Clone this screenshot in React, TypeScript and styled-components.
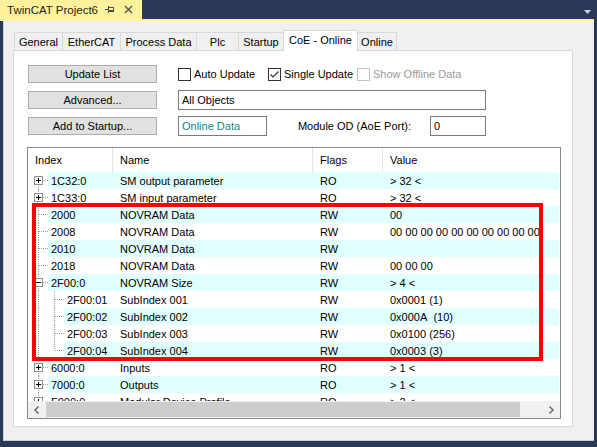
import React from "react";
import styled, { createGlobalStyle } from "styled-components";

const GlobalStyle = createGlobalStyle`
  html, body {
    margin: 0;
    padding: 0;
    background: #293955;
  }
  body {
    font-family: "Liberation Sans", Arial, sans-serif;
    font-size: 11px;
    color: #000;
  }
  * {
    box-sizing: border-box;
  }
`;

const Window = styled.div`
  width: 597px;
  height: 447px;
  background: #293955;
  display: flex;
  flex-direction: column;
  overflow: hidden;
`;

const TitleBar = styled.div`
  height: 19px;
  display: flex;
  align-items: stretch;
  flex-shrink: 0;
`;

const DocTab = styled.div`
  width: 142px;
  background: #fff29d;
  display: flex;
  align-items: center;
  padding-left: 7px;
  font-size: 11.5px;
  color: #1e1e1e;
`;

const DocTitle = styled.span`
  width: 105px;
  white-space: nowrap;
`;

const TabIcon = styled.span`
  display: flex;
  align-items: center;
  margin-right: 9px;
`;

const DropArrow = styled.span`
  margin-left: auto;
  margin-right: 6px;
  align-self: flex-end;
  margin-bottom: 5px;
  display: flex;
`;

const YellowRule = styled.div`
  height: 2px;
  margin-right: 3px;
  background: #fff29d;
  flex-shrink: 0;
`;

const Panel = styled.div`
  flex: 1;
  margin: 0 3px 6px 3px;
  background: #f0f0f0;
  border-left: 1px solid #cccedb;
  border-bottom: 1px solid #cccedb;
  padding-top: 9px;
  display: flex;
  flex-direction: column;
`;

const TabStrip = styled.div`
  display: flex;
  align-items: flex-end;
  height: 21px;
  margin-left: 10px;
  margin-bottom: -1px;
  position: relative;
  z-index: 1;
`;

const Tab = styled.div<{ $w: number; $active?: boolean }>`
  width: ${(p) => p.$w}px;
  height: ${(p) => (p.$active ? 21 : 18)}px;
  margin-bottom: ${(p) => (p.$active ? 0 : 1)}px;
  margin-right: -1px;
  border: 1px solid #d9d9d9;
  border-bottom: none;
  background: ${(p) => (p.$active ? "#ffffff" : "#f0f0f0")};
  display: flex;
  align-items: center;
  justify-content: center;
  padding-top: ${(p) => (p.$active ? 0 : 1)}px;
  padding-bottom: ${(p) => (p.$active ? 2 : 0)}px;
  white-space: nowrap;
  position: relative;
  z-index: ${(p) => (p.$active ? 2 : 1)};
`;

const Page = styled.div`
  margin-left: 9px;
  width: 560px;
  height: 377px;
  background: #ffffff;
  border: 1px solid #d9d9d9;
  padding: 13px 0 0 13px;
`;

const Controls = styled.div`
  display: grid;
  grid-template-columns: 129px 308px;
  column-gap: 21px;
  grid-auto-rows: 20px;
  row-gap: 6px;
  align-items: center;
  margin-left: 1px;
`;

const Button = styled.button`
  height: 18px;
  padding: 0;
  background: #e1e1e1;
  border: 1px solid #adadad;
  font-family: inherit;
  font-size: 11px;
  color: #000;
`;

const CheckRow = styled.div`
  display: flex;
  align-items: center;
`;

const CheckItem = styled.label<{ $w?: number; $disabled?: boolean }>`
  display: flex;
  align-items: center;
  gap: 3px;
  width: ${(p) => (p.$w ? `${p.$w}px` : "auto")};
  color: ${(p) => (p.$disabled ? "#9a9a9a" : "#000")};
  white-space: nowrap;
`;

const Box = styled.span<{ $disabled?: boolean }>`
  width: 13px;
  height: 13px;
  border: 1px solid ${(p) => (p.$disabled ? "#c4c4c4" : "#333333")};
  background: #fff;
  display: flex;
  align-items: center;
  justify-content: center;
  flex-shrink: 0;
`;

const TextField = styled.div<{ $w?: number; $teal?: boolean }>`
  height: 20px;
  width: ${(p) => (p.$w ? `${p.$w}px` : "100%")};
  border: 1px solid #7a7a7a;
  background: #fff;
  padding-left: 3px;
  display: flex;
  align-items: center;
  color: ${(p) => (p.$teal ? "#138585" : "#000")};
  flex-shrink: 0;
`;

const FieldRow = styled.div`
  display: flex;
  align-items: center;
`;

const PortLabel = styled.span`
  margin-left: auto;
  margin-right: 19px;
  white-space: nowrap;
`;

const ListBox = styled.div`
  margin-top: 11px;
  width: 534px;
  height: 272px;
  border: 1px solid #828790;
  background: #fff;
  position: relative;
  display: flex;
  flex-direction: column;
  overflow: hidden;
`;

const Header = styled.div`
  height: 24px;
  display: flex;
  flex-shrink: 0;
`;

const HeadCell = styled.div<{ $w?: number }>`
  width: ${(p) => (p.$w ? `${p.$w}px` : "auto")};
  flex: ${(p) => (p.$w ? "none" : 1)};
  padding-left: 7px;
  border-right: ${(p) => (p.$w ? "1px solid #e5e5e5" : "none")};
  display: flex;
  align-items: center;
`;

const Body = styled.div`
  flex: 1;
  overflow: hidden;
`;

const Row = styled.div`
  height: 17px;
  display: flex;
`;

const Band = styled.div<{ $alt: boolean }>`
  flex: 1;
  display: flex;
  align-items: center;
  margin-right: 1px;
  background: ${(p) => (p.$alt ? "#e0ffff" : "transparent")};
  white-space: nowrap;
  overflow: hidden;
`;

const Cell = styled.div<{ $w?: number; $pad?: number }>`
  width: ${(p) => (p.$w ? `${p.$w}px` : "auto")};
  flex: ${(p) => (p.$w ? "none" : 1)};
  padding-left: ${(p) => p.$pad ?? 7}px;
  overflow: hidden;
`;

const ScrollBar = styled.div`
  height: 17px;
  flex-shrink: 0;
  display: flex;
  background: #f0f0f0;
`;

const ScrollArrow = styled.div`
  width: 17px;
  display: flex;
  align-items: center;
  justify-content: center;
`;

const Track = styled.div`
  flex: 1;
  padding: 1px 0 1px 1px;
`;

const Thumb = styled.div`
  width: 474px;
  height: 100%;
  background: #cdcdcd;
`;

const Highlight = styled.div`
  position: absolute;
  left: 4px;
  top: 55px;
  width: 511px;
  height: 158px;
  border: 4px solid #ff0000;
  pointer-events: none;
`;

type Entry = {
  idx: string;
  name: string;
  flags: string;
  value: string;
  level: number;
  box?: "+" | "-";
  last?: boolean;
};

const entries: Entry[] = [
  { idx: "1C32:0", name: "SM output parameter", flags: "RO", value: "> 32 <", level: 0, box: "+" },
  { idx: "1C33:0", name: "SM input parameter", flags: "RO", value: "> 32 <", level: 0, box: "+" },
  { idx: "2000", name: "NOVRAM Data", flags: "RW", value: "00", level: 0 },
  { idx: "2008", name: "NOVRAM Data", flags: "RW", value: "00 00 00 00 00 00 00 00 00 00", level: 0 },
  { idx: "2010", name: "NOVRAM Data", flags: "RW", value: "", level: 0 },
  { idx: "2018", name: "NOVRAM Data", flags: "RW", value: "00 00 00", level: 0 },
  { idx: "2F00:0", name: "NOVRAM Size", flags: "RW", value: "> 4 <", level: 0, box: "-" },
  { idx: "2F00:01", name: "SubIndex 001", flags: "RW", value: "0x0001 (1)", level: 1 },
  { idx: "2F00:02", name: "SubIndex 002", flags: "RW", value: "0x000A\u00a0 (10)", level: 1 },
  { idx: "2F00:03", name: "SubIndex 003", flags: "RW", value: "0x0100 (256)", level: 1 },
  { idx: "2F00:04", name: "SubIndex 004", flags: "RW", value: "0x0003 (3)", level: 1, last: true },
  { idx: "6000:0", name: "Inputs", flags: "RO", value: "> 1 <", level: 0, box: "+" },
  { idx: "7000:0", name: "Outputs", flags: "RO", value: "> 1 <", level: 0, box: "+" },
  { idx: "F000:0", name: "Modular Device Profile", flags: "RO", value: "> 2 <", level: 0, box: "+" },
];

const dot = { stroke: "#a0a0a0", strokeWidth: 1, strokeDasharray: "1 1" };

const TreeGutter: React.FC<{ e: Entry; first: boolean }> = ({ e, first }) => {
  const w = 20 + e.level * 16;
  return (
    <svg width={w} height={17} style={{ flexShrink: 0 }}>
      <line x1={10.5} y1={first ? 8.5 : 0} x2={10.5} y2={17} {...dot} />
      {e.level === 0 && e.box && (
        <>
          <line x1={15} y1={8.5} x2={20} y2={8.5} {...dot} />
          <rect x={6.5} y={4.5} width={8} height={8} fill="#fff" stroke="#919191" />
          <line x1={8} y1={8.5} x2={13} y2={8.5} stroke="#000" />
          {e.box === "+" && <line x1={10.5} y1={6} x2={10.5} y2={11} stroke="#000" />}
        </>
      )}
      {e.level === 0 && !e.box && <line x1={11} y1={8.5} x2={20} y2={8.5} {...dot} />}
      {e.level === 1 && (
        <>
          <line x1={26.5} y1={0} x2={26.5} y2={e.last ? 8.5 : 17} {...dot} />
          <line x1={27} y1={8.5} x2={36} y2={8.5} {...dot} />
        </>
      )}
    </svg>
  );
};

const tabs = [
  { label: "General", w: 49 },
  { label: "EtherCAT", w: 59 },
  { label: "Process Data", w: 77 },
  { label: "Plc", w: 43 },
  { label: "Startup", w: 46 },
  { label: "CoE - Online", w: 75, active: true },
  { label: "Online", w: 40 },
];

const Check: React.FC<{ label: string; w?: number; checked?: boolean; disabled?: boolean }> = ({
  label,
  w,
  checked,
  disabled,
}) => (
  <CheckItem $w={w} $disabled={disabled}>
    <Box $disabled={disabled}>
      {checked && (
        <svg width={11} height={11} viewBox="0 0 11 11">
          <polyline points="1.5,5.5 4,8 9.5,2.5" fill="none" stroke="#333" strokeWidth={1.2} />
        </svg>
      )}
    </Box>
    {label}
  </CheckItem>
);

export default function App() {
  return (
    <Window>
      <GlobalStyle />
      <TitleBar>
        <DocTab>
          <DocTitle>TwinCAT Project6</DocTitle>
          <TabIcon>
            <svg width={10} height={9} viewBox="0 0 10 9">
              <line x1={0} y1={4.5} x2={3} y2={4.5} stroke="#4d4d4d" />
              <line x1={3.5} y1={1} x2={3.5} y2={8} stroke="#4d4d4d" />
              <rect x={3.5} y={2.5} width={5} height={4} fill="none" stroke="#4d4d4d" />
              <line x1={3.5} y1={5.5} x2={8.5} y2={5.5} stroke="#4d4d4d" />
            </svg>
          </TabIcon>
          <TabIcon>
            <svg width={9} height={9} viewBox="0 0 9 9">
              <path d="M1 1 L8 8 M8 1 L1 8" stroke="#5a5a5a" strokeWidth={1.5} />
            </svg>
          </TabIcon>
        </DocTab>
        <DropArrow>
          <svg width={7} height={4} viewBox="0 0 7 4">
            <polygon points="0,0 7,0 3.5,4" fill="#ced4dd" />
          </svg>
        </DropArrow>
      </TitleBar>
      <YellowRule />
      <Panel>
        <TabStrip>
          {tabs.map((t) => (
            <Tab key={t.label} $w={t.w} $active={t.active}>
              {t.label}
            </Tab>
          ))}
        </TabStrip>
        <Page>
          <Controls>
            <Button>Update List</Button>
            <CheckRow>
              <Check label="Auto Update" w={90} />
              <Check label="Single Update" w={89} checked />
              <Check label="Show Offline Data" disabled />
            </CheckRow>
            <Button>Advanced...</Button>
            <TextField>All Objects</TextField>
            <Button>Add to Startup...</Button>
            <FieldRow>
              <TextField $w={89} $teal>
                Online Data
              </TextField>
              <PortLabel>Module OD (AoE Port):</PortLabel>
              <TextField $w={56}>0</TextField>
            </FieldRow>
          </Controls>
          <ListBox>
            <Header>
              <HeadCell $w={85}>Index</HeadCell>
              <HeadCell $w={200}>Name</HeadCell>
              <HeadCell $w={70}>Flags</HeadCell>
              <HeadCell>Value</HeadCell>
            </Header>
            <Body>
              {entries.map((e, i) => (
                <Row key={e.idx}>
                  <TreeGutter e={e} first={i === 0} />
                  <Band $alt={i % 2 === 0}>
                    <Cell $w={65 - e.level * 16} $pad={3}>
                      {e.idx}
                    </Cell>
                    <Cell $w={200}>{e.name}</Cell>
                    <Cell $w={70}>{e.flags}</Cell>
                    <Cell>{e.value}</Cell>
                  </Band>
                </Row>
              ))}
            </Body>
            <ScrollBar>
              <ScrollArrow>
                <svg width={5} height={8} viewBox="0 0 5 8">
                  <polyline points="4.5,0.5 1,4 4.5,7.5" fill="none" stroke="#606060" strokeWidth={1.4} />
                </svg>
              </ScrollArrow>
              <Track>
                <Thumb />
              </Track>
              <ScrollArrow>
                <svg width={5} height={8} viewBox="0 0 5 8">
                  <polyline points="0.5,0.5 4,4 0.5,7.5" fill="none" stroke="#606060" strokeWidth={1.4} />
                </svg>
              </ScrollArrow>
            </ScrollBar>
            <Highlight />
          </ListBox>
        </Page>
      </Panel>
    </Window>
  );
}
